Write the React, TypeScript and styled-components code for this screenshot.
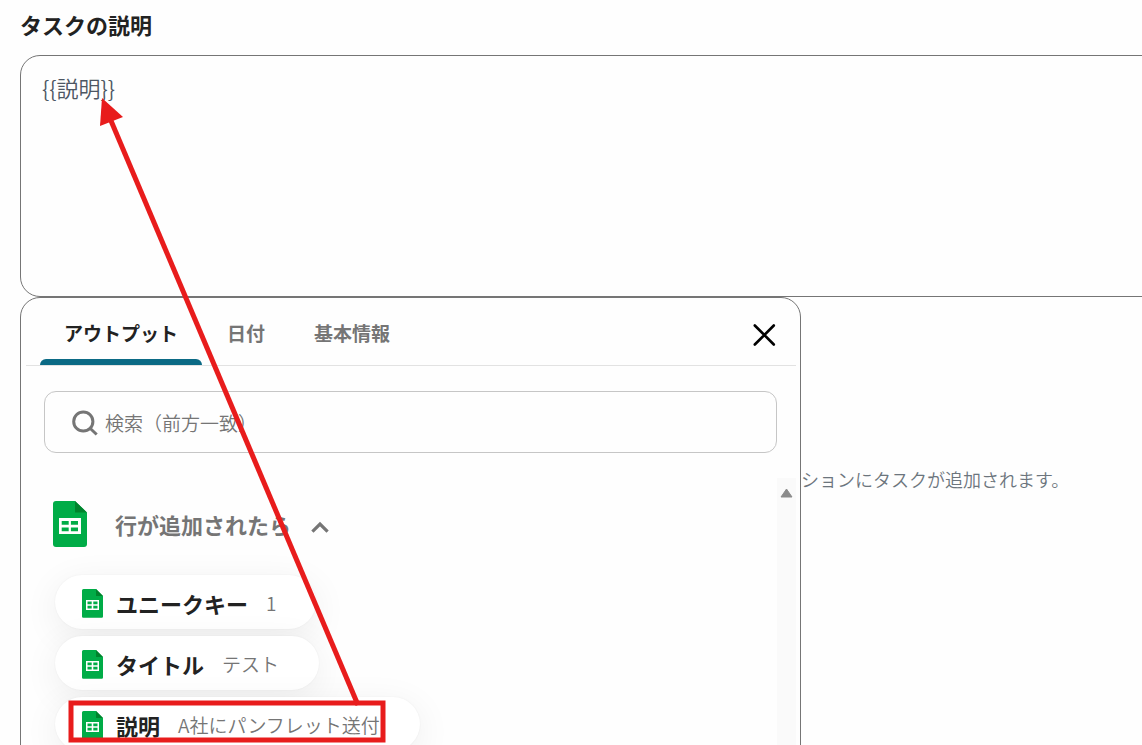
import React from "react";
import styled, { createGlobalStyle } from "styled-components";

const GlobalStyle = createGlobalStyle`
  *, *::before, *::after { box-sizing: border-box; }
  body {
    margin: 0;
    background: #fefefe;
    color: #222;
    font-family: "Noto Sans CJK JP", "Noto Sans", sans-serif;
  }
  button, input, textarea { font: inherit; }
`;

const Page = styled.main`
  position: relative;
  height: 100vh;
  padding: 8px 0 0 20px;
  overflow: hidden;
`;

const FieldLabel = styled.label`
  display: block;
  margin-bottom: 15px;
  font-size: 22px;
  line-height: 32px;
  font-weight: 700;
`;

const Description = styled.textarea`
  display: block;
  width: calc(100% + 40px);
  height: 242px;
  padding: 15px 21px;
  border: 1px solid #757575;
  border-radius: 20px;
  background: #fefefe;
  color: #4d5663;
  font-size: 22px;
  line-height: 32px;
  font-weight: 350;
  resize: none;
  outline: none;
`;

const Below = styled.div`
  position: relative;
`;

const Hint = styled.p`
  margin: 0;
  padding: 166px 0 0 745px;
  color: #6c757d;
  font-size: 18px;
  line-height: 32px;
  font-weight: 350;
  white-space: nowrap;
`;

const Picker = styled.section`
  position: absolute;
  top: 0;
  left: 0;
  width: 781px;
  height: 560px;
  padding: 0 4px 0 5px;
  border: 1px solid #757575;
  border-radius: 20px;
  background: #fefefe;
`;

const PickerHeader = styled.header`
  display: flex;
  align-items: stretch;
  justify-content: space-between;
  height: 68px;
  padding: 0 16px 0 14px;
  border-bottom: 1px solid #e2e2e2;
`;

const Tabs = styled.div`
  display: flex;
  gap: 1px;
`;

const Tab = styled.button<{ $active?: boolean }>`
  display: flex;
  flex-direction: column;
  justify-content: space-between;
  padding: 19px 0 0;
  border: 0;
  background: none;
  color: ${(p) => (p.$active ? "#222" : "#757575")};
  font-size: 19px;
  line-height: 32px;
  font-weight: 700;

  span { padding: 0 24px; }
  &::after {
    content: "";
    width: 100%;
    height: 6px;
    border-radius: 6px 6px 0 0;
    background: ${(p) => (p.$active ? "#0b6a85" : "transparent")};
  }
`;

const CloseButton = styled.button`
  display: flex;
  align-items: center;
  padding: 7px 4px 0;
  border: 0;
  background: none;
`;

const SearchBox = styled.label`
  display: flex;
  align-items: center;
  gap: 7px;
  height: 62px;
  margin: 25px 19px 0 18px;
  padding: 2px 26px 0;
  border: 1px solid #c6c6c6;
  border-radius: 12px;
`;

const SearchInput = styled.input`
  flex: 1;
  min-width: 0;
  padding: 0;
  border: 0;
  outline: none;
  background: none;
  font-size: 19px;
  line-height: 32px;
  font-weight: 350;
  &::placeholder { color: #757575; opacity: 1; }
`;

const Results = styled.div`
  display: flex;
  height: 380px;
  margin-top: 25px;
  overflow: hidden;
`;

const ResultsBody = styled.div`
  flex: 1;
  min-width: 0;
  padding: 23px 0 0 27px;
`;

const ScrollTrack = styled.div`
  display: flex;
  justify-content: center;
  width: 19px;
  padding-top: 10px;
  background: #fafafa;
`;

const GroupToggle = styled.button`
  display: flex;
  align-items: center;
  padding: 0;
  border: 0;
  background: none;
  color: #757575;
  font-size: 22px;
  line-height: 32px;
  font-weight: 700;

  span { margin: 0 19px 0 28px; }
`;

const ChipList = styled.div`
  display: flex;
  flex-direction: column;
  align-items: flex-start;
  gap: 7px;
  padding: 28px 0 0 2px;
`;

const Chip = styled.button`
  display: flex;
  align-items: center;
  height: 54px;
  padding: 2px 40px 0 27px;
  border: 0;
  border-radius: 27px;
  background: #fff;
  box-shadow: 0 8px 36px rgba(0, 0, 0, 0.07), 0 0 2px rgba(0, 0, 0, 0.06);
  white-space: nowrap;
`;

const ChipName = styled.span`
  margin: 0 18px 0 13px;
  color: #222;
  font-size: 22px;
  line-height: 32px;
  font-weight: 700;
`;

const ChipValue = styled.span`
  color: #757575;
  font-size: 19px;
  line-height: 32px;
  font-weight: 350;
`;

const Annotation = styled.svg`
  position: absolute;
  top: 0;
  left: 0;
  pointer-events: none;
`;

const SheetIcon = () => (
  <svg width="34" height="46" viewBox="0 0 34 46" aria-hidden="true">
    <path d="M3 0H22L34 11.5V43a3 3 0 0 1-3 3H3a3 3 0 0 1-3-3V3a3 3 0 0 1 3-3Z" fill="#00ac47" />
    <path d="M22 0 34 11.5H22Z" fill="#00832d" />
    <path
      d="M6 17H28V33H6ZM8.7 20V23.7H15.7V20ZM17.9 20V23.7H25V20ZM8.7 26.6V30.3H15.7V26.6ZM17.9 26.6V30.3H25V26.6Z"
      fill="#fff"
      fillRule="evenodd"
    />
  </svg>
);

const SmallSheetIcon = () => (
  <svg width="21" height="30" viewBox="0 0 21 30" aria-hidden="true">
    <path d="M1.5 1H14L21 8V28.5a1.2 1.2 0 0 1-1.2 1.2H1.2A1.2 1.2 0 0 1 0 28.5V2.5A1.5 1.5 0 0 1 1.5 1Z" fill="#00ac47" />
    <path d="M14 1 21 8H14Z" fill="#00832d" />
    <path
      d="M4 12H17V22H4ZM5.5 13.6V16.2H9.7V13.6ZM11.3 13.6V16.2H15.5V13.6ZM5.5 17.8V20.4H9.7V17.8ZM11.3 17.8V20.4H15.5V17.8Z"
      fill="#fff"
      fillRule="evenodd"
    />
  </svg>
);

const chips = [
  { name: "ユニークキー", value: "1" },
  { name: "タイトル", value: "テスト" },
  { name: "説明", value: "A社にパンフレット送付" },
];

export default function App() {
  return (
    <>
      <GlobalStyle />
      <Page>
        <FieldLabel htmlFor="description">タスクの説明</FieldLabel>
        <Description id="description" defaultValue="{{説明}}" spellCheck={false} />
        <Below>
          <Hint>セクションにタスクが追加されます。</Hint>
          <Picker>
            <PickerHeader>
              <Tabs role="tablist">
                <Tab type="button" role="tab" aria-selected="true" $active>
                  <span>アウトプット</span>
                </Tab>
                <Tab type="button" role="tab" aria-selected="false">
                  <span>日付</span>
                </Tab>
                <Tab type="button" role="tab" aria-selected="false">
                  <span>基本情報</span>
                </Tab>
              </Tabs>
              <CloseButton type="button" aria-label="閉じる">
                <svg width="24" height="24" viewBox="0 0 24 24" fill="none" stroke="#000" strokeWidth="2.6" strokeLinecap="round">
                  <path d="M2.8 2.5 21.8 21.5M21.8 2.5 2.8 21.5" />
                </svg>
              </CloseButton>
            </PickerHeader>
            <SearchBox>
              <svg width="27" height="27" viewBox="0 0 27 27" fill="none" stroke="#757575" strokeWidth="3" aria-hidden="true">
                <circle cx="12.3" cy="11.5" r="9.6" />
                <path d="M18.8 18 25.7 24.5" />
              </svg>
              <SearchInput type="text" placeholder="検索（前方一致）" aria-label="検索" />
            </SearchBox>
            <Results>
              <ResultsBody>
                <GroupToggle type="button" aria-expanded="true">
                  <SheetIcon />
                  <span>行が追加されたら</span>
                  <svg width="20" height="18" viewBox="0 0 20 18" fill="none" stroke="#757575" strokeWidth="3.2" aria-hidden="true">
                    <path d="M2.4 16.6 10 9 17.6 16.6" />
                  </svg>
                </GroupToggle>
                <ChipList>
                  {chips.map((c) => (
                    <Chip key={c.name} type="button">
                      <SmallSheetIcon />
                      <ChipName>{c.name}</ChipName>
                      <ChipValue>{c.value}</ChipValue>
                    </Chip>
                  ))}
                </ChipList>
              </ResultsBody>
              <ScrollTrack>
                <svg width="13" height="10" viewBox="0 0 13 10" aria-hidden="true">
                  <path d="M6.5 1 12 9H1Z" fill="#8b8b8b" stroke="#8b8b8b" strokeWidth="1" strokeLinejoin="round" />
                </svg>
              </ScrollTrack>
            </Results>
          </Picker>
        </Below>
        <Annotation width="400" height="745" viewBox="0 0 400 745" aria-hidden="true">
          <path d="M358 705 109 116" stroke="#e81c1c" strokeWidth="5" />
          <path d="M102 98 123 117 100 126Z" fill="#e81c1c" />
          <rect x="71" y="703" width="312" height="37" fill="none" stroke="#e81c1c" strokeWidth="5" />
        </Annotation>
      </Page>
    </>
  );
}
